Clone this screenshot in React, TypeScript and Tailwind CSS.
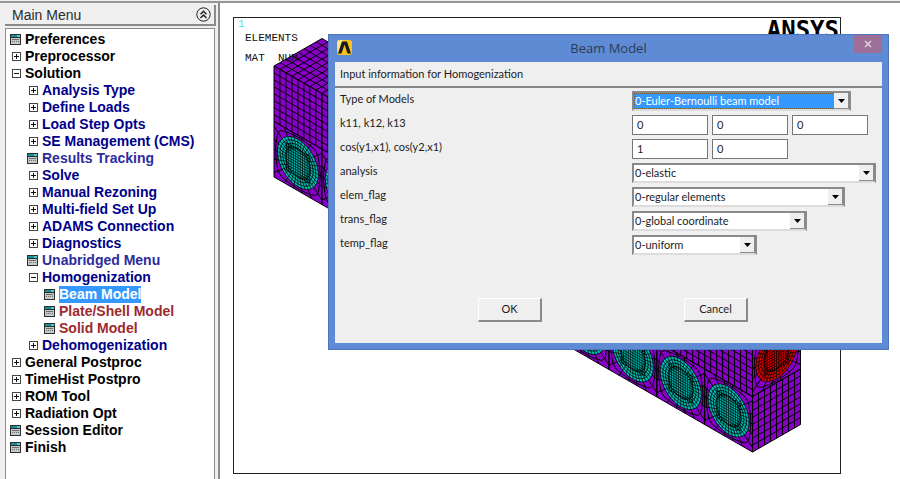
import type { ReactNode } from "react";
import clsx from "clsx";

type MenuItem = {
  label: string;
  depth: 0 | 1 | 2;
  icon: "plus" | "minus" | "form";
  tone?: "macro" | "form" | "selected";
};

const menuItems: MenuItem[] = [
  { label: "Preferences", depth: 0, icon: "form" },
  { label: "Preprocessor", depth: 0, icon: "plus" },
  { label: "Solution", depth: 0, icon: "minus" },
  { label: "Analysis Type", depth: 1, icon: "plus" },
  { label: "Define Loads", depth: 1, icon: "plus" },
  { label: "Load Step Opts", depth: 1, icon: "plus" },
  { label: "SE Management (CMS)", depth: 1, icon: "plus" },
  { label: "Results Tracking", depth: 1, icon: "form", tone: "form" },
  { label: "Solve", depth: 1, icon: "plus" },
  { label: "Manual Rezoning", depth: 1, icon: "plus" },
  { label: "Multi-field Set Up", depth: 1, icon: "plus" },
  { label: "ADAMS Connection", depth: 1, icon: "plus" },
  { label: "Diagnostics", depth: 1, icon: "plus" },
  { label: "Unabridged Menu", depth: 1, icon: "form", tone: "form" },
  { label: "Homogenization", depth: 1, icon: "minus" },
  { label: "Beam Model", depth: 2, icon: "form", tone: "selected" },
  { label: "Plate/Shell Model", depth: 2, icon: "form", tone: "macro" },
  { label: "Solid Model", depth: 2, icon: "form", tone: "macro" },
  { label: "Dehomogenization", depth: 1, icon: "plus" },
  { label: "General Postproc", depth: 0, icon: "plus" },
  { label: "TimeHist Postpro", depth: 0, icon: "plus" },
  { label: "ROM Tool", depth: 0, icon: "plus" },
  { label: "Radiation Opt", depth: 0, icon: "plus" },
  { label: "Session Editor", depth: 0, icon: "form" },
  { label: "Finish", depth: 0, icon: "form" }
];

const depthPadding = ["pl-[3px]", "pl-5", "pl-[37px]"];

function MenuIcon({ icon }: { icon: MenuItem["icon"] }) {
  if (icon === "form") {
    return (
      <svg className="h-3 w-3 shrink-0" viewBox="0 0 12 12" shapeRendering="crispEdges" aria-hidden="true">
        <rect x="0" y="0" width="11" height="11" fill="#2a2f2f" />
        <rect x="1" y="1" width="6" height="2" fill="#118f94" />
        <rect x="7" y="1" width="3" height="2" fill="#5cc5c8" />
        <rect x="1" y="4" width="9" height="6" fill="#c4c8c6" />
        <path d="M2 5.5h7M2 7.5h1m1 0h1m1 0h1m1 0h1" stroke="#6c706e" />
      </svg>
    );
  }

  return (
    <svg className="h-3 w-3 shrink-0" viewBox="0 0 12 12" shapeRendering="crispEdges" aria-hidden="true">
      <rect x="2.5" y="1.5" width="8" height="8" fill="#fff" stroke="#444" />
      <path d={icon === "plus" ? "M4 5.5h5M6.5 3v5" : "M4 5.5h5"} stroke="#111" fill="none" />
    </svg>
  );
}

function MainMenu() {
  return (
    <aside className="flex w-[220px] shrink-0 flex-col border-r-2 border-[#8c8c8c] bg-[#efefef] pl-[5px] pr-0.5">
      <div className="mt-0.5 flex h-[21px] items-center justify-between border-b-2 border-r-2 border-[#8b8b8b] pl-[7px] pr-[3px]">
        <h1 className="text-[14px] leading-5 text-[#2b2b2b]">Main Menu</h1>
        <button type="button" aria-label="Collapse all">
          <svg className="h-[15px] w-[15px]" viewBox="0 0 15 15" fill="none" stroke="#222" aria-hidden="true">
            <circle cx="7.5" cy="7.5" r="6.7" />
            <path d="M4.5 7.2 7.5 4.2l3 3M4.5 11l3-3 3 3" strokeWidth="1.5" />
          </svg>
        </button>
      </div>
      <nav className="mr-px mt-0.5 grow border-l border-r border-t border-[#8b8b8b] bg-white pt-0.5">
        <ul>
          {menuItems.map((item) => (
            <li key={item.label} className={clsx("flex", depthPadding[item.depth])}>
              <button
                type="button"
                className="flex h-[17px] items-center gap-[3px] whitespace-nowrap pl-px text-[14px] font-bold leading-[17px]"
              >
                <MenuIcon icon={item.icon} />
                <span
                  className={clsx(
                    item.tone === "selected" && "bg-[#3399ff] text-white",
                    item.tone === "macro" && "text-[#9c2a2e]",
                    item.tone === "form" && "text-[#2c2ca0]",
                    !item.tone && (item.depth === 0 ? "text-black" : "text-[#00008b]")
                  )}
                >
                  {item.label}
                </span>
              </button>
            </li>
          ))}
        </ul>
      </nav>
    </aside>
  );
}

const RADIUS = 0.43;
const SPOKES = 36;

function gridPath(columns: number, rows: number, width = 1, height = 1) {
  let d = "";
  for (let i = 0; i <= columns; i++) d += `M${(i * width) / columns} 0V${height}`;
  for (let i = 0; i <= rows; i++) d += `M0 ${(i * height) / rows}H${width}`;
  return d;
}

// quads that fan out from the fiber to the square edge of its cell
function matrixPath() {
  let d = "M0 0H1V1H0Z";
  let ring = "";
  for (let i = 0; i < SPOKES; i++) {
    const a = (i * 2 * Math.PI) / SPOKES;
    const x = Math.cos(a);
    const y = Math.sin(a);
    const edge = 0.5 / Math.max(Math.abs(x), Math.abs(y));
    const mid = (edge + RADIUS) / 2;
    if (i % 2 === 0) d += `M${0.5 + x * RADIUS} ${0.5 + y * RADIUS}L${0.5 + x * edge} ${0.5 + y * edge}`;
    ring += `${i ? "L" : "M"}${0.5 + x * mid} ${0.5 + y * mid}`;
  }
  return `${d}${ring}Z`;
}

function fiberPath() {
  let d = "";
  for (let i = 0; i < SPOKES; i++) {
    const a = (i * 2 * Math.PI) / SPOKES;
    d += `M${0.5 + Math.cos(a) * 0.22} ${0.5 + Math.sin(a) * 0.22}L${0.5 + Math.cos(a) * RADIUS} ${0.5 + Math.sin(a) * RADIUS}`;
  }
  for (let i = -5; i <= 5; i++) {
    const t = 0.5 + i * 0.048;
    d += `M${t} .24V.76M.24 ${t}H.76`;
  }
  return d;
}

const cellGrid = gridPath(8, 8);
const cellMatrix = matrixPath();
const cellFiber = fiberPath();

function Mesh({ d, width = 1 }: { d: string; width?: number }) {
  return <path d={d} fill="none" stroke="#000" strokeWidth={width} vectorEffect="non-scaling-stroke" />;
}

function FiberCell({ transform, color }: { transform: string; color: string }) {
  return (
    <g transform={transform}>
      <Mesh d={cellMatrix} />
      <circle cx=".5" cy=".5" r={RADIUS} fill={color} />
      <Mesh d={cellFiber} width={0.7} />
      {[RADIUS, 0.375, 0.32, 0.265].map((r) => (
        <circle key={r} cx=".5" cy=".5" r={r} fill="none" stroke="#000" strokeWidth="0.8" vectorEffect="non-scaling-stroke" />
      ))}
    </g>
  );
}

function MeshedBlock() {
  const cells = Array.from({ length: 10 }, (_, i) => i);

  return (
    <svg
      className="absolute left-[39px] top-[19px] h-[417px] w-[529px]"
      viewBox="273 37 529 417"
      role="img"
      aria-label="Meshed block"
    >
      <path d="M274 66 322 38.500 800.500 313.500V424.500L752.500 452 274 177Z" fill="#8800c8" />
      <g transform="matrix(47.85 27.5 48 -27.5 274 66)">
        <Mesh d={gridPath(80, 8, 10, 1)} />
      </g>
      {cells.map((i) => (
        <g key={i}>
          <g transform={`matrix(47.85 27.5 0 55.5 ${274 + i * 47.85} ${66 + i * 27.5})`}>
            <Mesh d={cellGrid} />
          </g>
          <FiberCell
            transform={`matrix(47.85 27.5 0 55.5 ${274 + i * 47.85} ${121.5 + i * 27.5})`}
            color="#00bdb4"
          />
        </g>
      ))}
      <FiberCell transform="matrix(48 -27.5 0 55.5 752.5 341)" color="#e00000" />
      <g transform="matrix(48 -27.5 0 55.5 752.5 396.5)">
        <Mesh d={cellGrid} />
      </g>
    </svg>
  );
}

function GraphicsWindow() {
  return (
    <main className="flex min-w-0 grow bg-white pb-[5px] pl-[13px] pr-[59px] pt-3.5">
      <div className="relative grow overflow-hidden border border-[#222] font-['Liberation_Mono',monospace] text-[11px] text-[#111]">
        <MeshedBlock />
        <div className="relative flex items-start justify-between">
          <div className="pl-1">
            <p className="leading-3 text-[#3ceeee]">1</p>
            <p className="pl-[7px] leading-4">ELEMENTS</p>
            <p className="whitespace-pre pl-[7px] pt-1 leading-4">MAT  NUM</p>
          </div>
          <p className="pr-px font-['DejaVu_Sans_Mono',monospace] text-[24px] font-bold leading-6 text-black">ANSYS</p>
        </div>
      </div>
    </main>
  );
}

function Row({ label, htmlFor, children }: { label: string; htmlFor: string; children: ReactNode }) {
  return (
    <div className="flex h-5 items-start">
      <label htmlFor={htmlFor} className="w-[292px] shrink-0 leading-4">
        {label}
      </label>
      <div className="flex gap-1">{children}</div>
    </div>
  );
}

function TextBox({ id, value, label }: { id: string; value: string; label?: string }) {
  return (
    <input
      id={id}
      type="text"
      defaultValue={value}
      aria-label={label}
      className="h-5 w-[76px] border border-[#777] bg-white pb-0.5 pl-1 leading-4 outline-none"
    />
  );
}

function Combo({ id, value, width, active }: { id: string; value: string; width: string; active?: boolean }) {
  return (
    <div className={clsx("relative h-5 border-2 border-[#8a8a8a] border-b-[#dcdcdc] bg-white", width)}>
      <select
        id={id}
        className={clsx(
          "block h-4 w-full appearance-none leading-4 outline-none",
          active ? "border border-dotted border-[#6b5a30] bg-[#3399ff] leading-[14px] text-white" : "pl-px"
        )}
      >
        <option>{value}</option>
      </select>
      <span className="pointer-events-none absolute right-0 top-0 flex h-4 w-[15px] items-center justify-center border-b border-r border-[#8a8a8a] bg-[#efefef]">
        <svg className="h-1 w-[7px]" viewBox="0 0 7 4" aria-hidden="true">
          <path d="M0 0h7L3.500 4z" fill="#000" />
        </svg>
      </span>
    </div>
  );
}

function DialogButton({ children }: { children: ReactNode }) {
  return (
    <button
      type="button"
      className="h-6 w-16 border border-b-2 border-r-2 border-b-[#8a8a8a] border-l-white border-r-[#8a8a8a] border-t-white bg-[#efefef]"
    >
      {children}
    </button>
  );
}

function BeamModelDialog() {
  return (
    <section
      role="dialog"
      aria-labelledby="dialog-title"
      className="absolute left-[328px] top-[34px] w-[561px] border border-[#4c75bd] bg-[#5e8bd3] px-1.5 pb-1.5 font-['Lato','Open_Sans',sans-serif] text-[11px] text-[#1c1c1c]"
    >
      <header className="grid h-[27px] grid-cols-[1fr_auto_1fr] items-start">
        <svg className="ml-0.5 mt-[5px] h-[15px] w-[15px]" viewBox="0 0 15 15" aria-hidden="true">
          <rect width="15" height="15" rx="2.500" fill="#f8c31c" />
          <path d="M0 3a3 3 0 0 1 3-3h3L1 13z" fill="#fbe48a" />
          <path d="M1 13.500 5 1.500h5L14 13.500H10.500L7.500 4.500 4.500 13.500z" fill="#1b1b1b" />
        </svg>
        <h2 id="dialog-title" className="font-['Open_Sans',sans-serif] text-[13px] leading-[27px] text-[#2c3a57]">
          Beam Model
        </h2>
        <button
          type="button"
          aria-label="Close"
          className="flex h-[18px] w-7 items-center justify-center justify-self-end bg-[#9b6f96]"
        >
          <svg className="h-2 w-2" viewBox="0 0 8 8" stroke="#e3d0e0" strokeWidth="1.500" aria-hidden="true">
            <path d="m1 1 6 6M7 1 1 7" />
          </svg>
        </button>
      </header>
      <form className="bg-[#efefef]" onSubmit={(event) => event.preventDefault()}>
        <p className="h-[26px] border-b-2 border-[#858585] pl-[5px] leading-6">Input information for Homogenization</p>
        <div className="flex flex-col gap-1 pl-[5px] pt-[3px]">
          <Row label="Type of Models" htmlFor="model">
            <Combo id="model" value="0-Euler-Bernoulli beam model" width="w-[219px]" active />
          </Row>
          <Row label="k11, k12, k13" htmlFor="k11">
            <TextBox id="k11" value="0" />
            <TextBox id="k12" value="0" label="k12" />
            <TextBox id="k13" value="0" label="k13" />
          </Row>
          <Row label="cos(y1,x1), cos(y2,x1)" htmlFor="cos1">
            <TextBox id="cos1" value="1" />
            <TextBox id="cos2" value="0" label="cos(y2,x1)" />
          </Row>
          <Row label="analysis" htmlFor="analysis">
            <Combo id="analysis" value="0-elastic" width="w-[244px]" />
          </Row>
          <Row label="elem_flag" htmlFor="elem">
            <Combo id="elem" value="0-regular elements" width="w-[213px]" />
          </Row>
          <Row label="trans_flag" htmlFor="trans">
            <Combo id="trans" value="0-global coordinate" width="w-[175px]" />
          </Row>
          <Row label="temp_flag" htmlFor="temp">
            <Combo id="temp" value="0-uniform" width="w-[125px]" />
          </Row>
        </div>
        <div className="flex gap-[142px] pb-[21px] pl-[143px] pt-[43px]">
          <DialogButton>OK</DialogButton>
          <DialogButton>Cancel</DialogButton>
        </div>
      </form>
    </section>
  );
}

export default function App() {
  return (
    <div className="relative flex min-h-screen flex-col bg-[#efefef] font-['Liberation_Sans',sans-serif]">
      <div className="h-[3px] border-b-2 border-[#949894]" />
      <div className="flex grow">
        <MainMenu />
        <GraphicsWindow />
      </div>
      <BeamModelDialog />
    </div>
  );
}
